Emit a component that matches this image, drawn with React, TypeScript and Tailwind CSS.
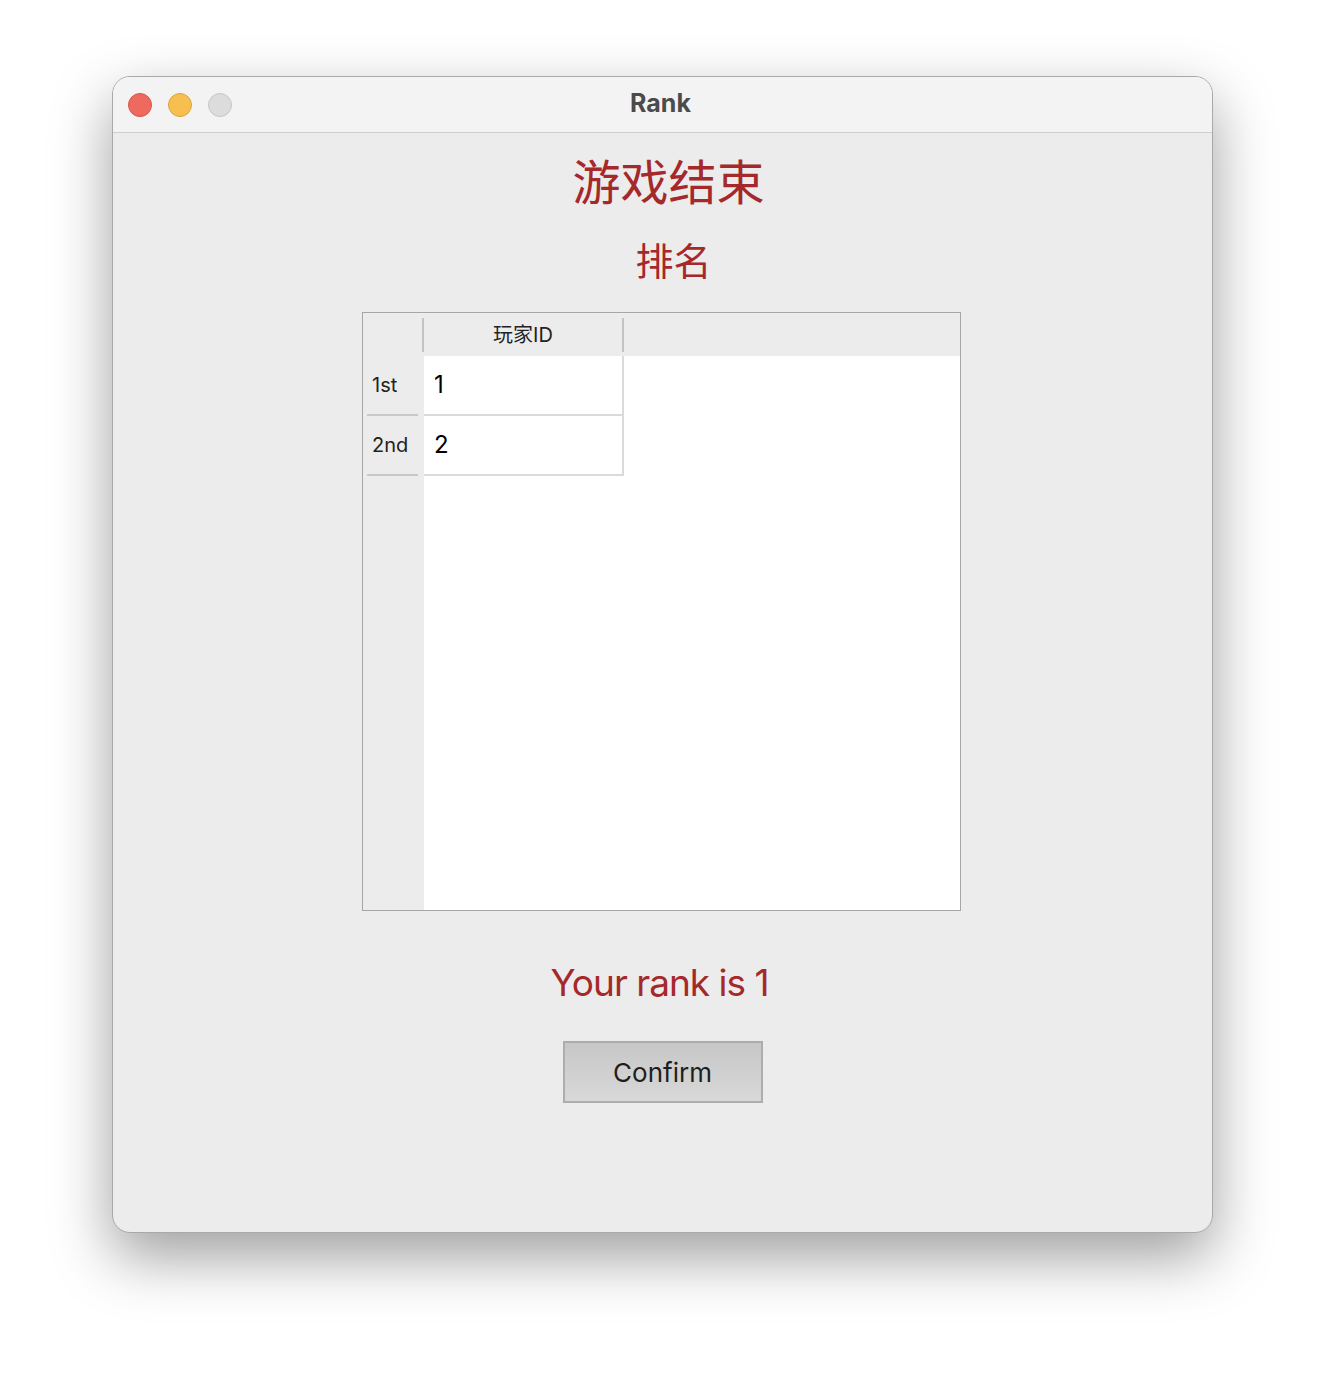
const rows = [
  { label: '1st', id: '1' },
  { label: '2nd', id: '2' },
];

const font = { fontFamily: 'Inter, "Noto Sans CJK SC", sans-serif' };

export default function App() {
  return (
    <div className="min-h-[1380px] w-[1324px] bg-white pl-[112px] pt-[76px]" style={font}>
      <div className="flex h-[1157px] w-[1101px] flex-col overflow-hidden rounded-[18px] border border-[#a9a9a9] bg-[#ececec] shadow-[0_24px_60px_rgba(0,0,0,0.38)]">
        {/* Title bar */}
        <div className="relative flex h-[56px] shrink-0 items-center border-b border-[#cfcfcf] bg-[#f3f3f3]">
          <div className="flex items-center gap-[16px] pl-[15px]">
            <span className="h-[24px] w-[24px] rounded-full border border-[#d9534a] bg-[#ee6a5f]" />
            <span className="h-[24px] w-[24px] rounded-full border border-[#dba443] bg-[#f6bf4f]" />
            <span className="h-[24px] w-[24px] rounded-full border border-[#c6c6c6] bg-[#dcdcdc]" />
          </div>
          <div className="absolute inset-0 flex items-center justify-center pb-[2px] pr-[4px] text-[25px] font-bold text-[#4b4b4b]">
            Rank
          </div>
        </div>

        {/* Content */}
        <div className="flex flex-1 flex-col items-center">
          <div className="mt-[22px] pl-[12px] text-[48px] leading-[56px] text-[#a5282a]">游戏结束</div>
          <div className="mt-[26px] pl-[22px] text-[38px] leading-[48px] text-[#a5282a]">排名</div>

          {/* Table */}
          <div className="mr-[2px] mt-[27px] flex h-[599px] w-[599px] flex-col border border-[#a6a6a6]">
            <div className="flex h-[43px] shrink-0 items-center bg-[#ececec]">
              <div className="w-[59px]" />
              <div className="h-[34px] w-[2px] bg-[#c4c4c4]" />
              <div className="w-[198px] text-center text-[20px] text-[#222]">玩家ID</div>
              <div className="h-[34px] w-[2px] bg-[#c4c4c4]" />
            </div>
            <div className="flex flex-1">
              <div className="flex w-[61px] flex-col bg-[#ececec]">
                {rows.map((r) => (
                  <div key={r.label} className="flex h-[60px] flex-col">
                    <div className="flex flex-1 items-center pl-[9px] text-[20px] text-[#222]">{r.label}</div>
                    <div className="ml-[4px] h-[2px] w-[51px] bg-[#c8c8c8]" />
                  </div>
                ))}
              </div>
              <div className="flex-1 bg-white">
                {rows.map((r) => (
                  <div
                    key={r.id}
                    className="flex h-[60px] w-[200px] items-center border-b-2 border-r-2 border-[#dadada] pl-[10px] text-[24px] text-black"
                  >
                    {r.id}
                  </div>
                ))}
              </div>
            </div>
          </div>

          <div className="mr-[6px] mt-[48px] text-[37px] leading-[48px] tracking-[-1px] text-[#a5282a]">Your rank is 1</div>

          <button className="mt-[34px] h-[62px] w-[200px] border-2 border-[#adadad] bg-gradient-to-b from-[#c7c7c7] to-[#d8d8d8] text-[26px] text-[#1e1e1e]">
            Confirm
          </button>
        </div>
      </div>
    </div>
  );
}
